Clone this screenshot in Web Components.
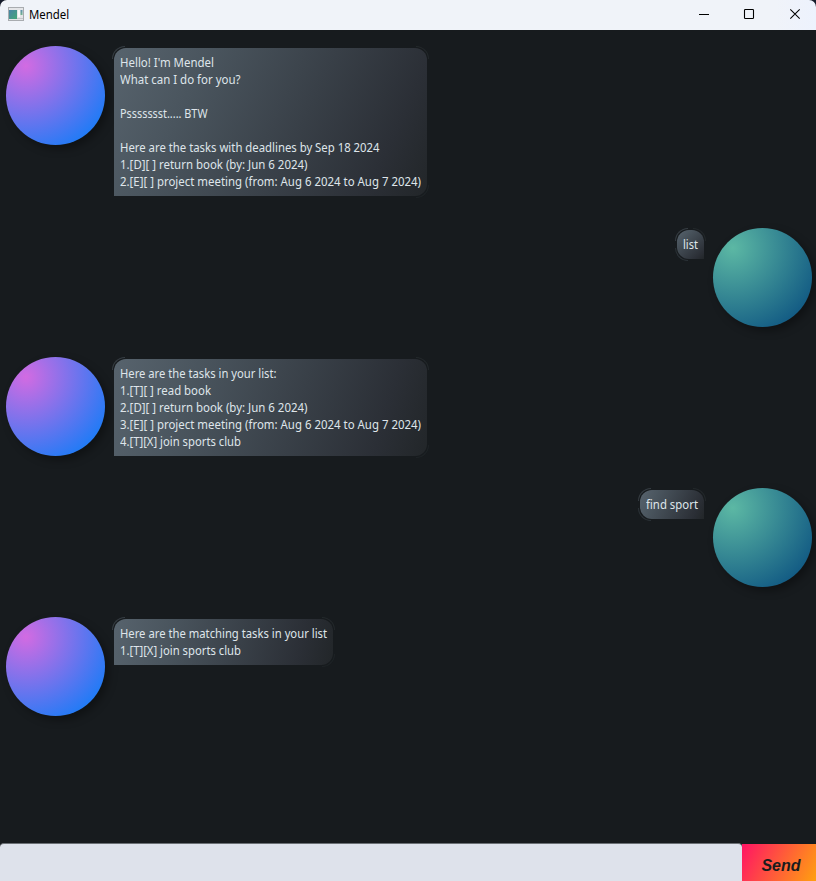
<!DOCTYPE html>
<html lang="en">
<head>
<meta charset="utf-8">
<title>Mendel</title>
<style>
body { margin: 0; background: #171b1e; overflow: hidden; }
</style>
</head>
<body>
<mendel-window>
  <title-bar slot="title">Mendel</title-bar>
  <chat-row style="--h:182px">
    <text-line w="94">Hello! I'm Mendel</text-line>
    <text-line w="120.5">What can I do for you?</text-line>
    <text-line></text-line>
    <text-line w="87.5">Pssssssst..... BTW</text-line>
    <text-line></text-line>
    <text-line w="259.5">Here are the tasks with deadlines by Sep 18 2024</text-line>
    <text-line w="187.5">1.[D][ ] return book (by: Jun 6 2024)</text-line>
    <text-line w="301">2.[E][ ] project meeting (from: Aug 6 2024 to Aug 7 2024)</text-line>
  </chat-row>
  <chat-row user style="--h:129px"><text-line w="15">list</text-line></chat-row>
  <chat-row style="--h:131px">
    <text-line w="156.5">Here are the tasks in your list:</text-line>
    <text-line w="91">1.[T][ ] read book</text-line>
    <text-line w="187.5">2.[D][ ] return book (by: Jun 6 2024)</text-line>
    <text-line w="301">3.[E][ ] project meeting (from: Aug 6 2024 to Aug 7 2024)</text-line>
    <text-line w="121">4.[T][X] join sports club</text-line>
  </chat-row>
  <chat-row user style="--h:129px"><text-line w="52">find sport</text-line></chat-row>
  <chat-row style="--h:131px">
    <text-line w="207">Here are the matching tasks in your list</text-line>
    <text-line w="121">1.[T][X] join sports club</text-line>
  </chat-row>
  <input-bar slot="footer">Send</input-bar>
</mendel-window>
<script>
const define = (name, html, ready) => customElements.define(name, class extends HTMLElement {
  constructor() {
    super();
    this.attachShadow({ mode: 'open' }).innerHTML = html;
  }
  connectedCallback() { if (ready) ready(this); }
});

define('mendel-window', `
<style>
:host { display: flex; flex-direction: column; width: 816px; height: 881px; background: #171b1e; overflow: hidden; }
main { flex: 1; min-height: 0; padding-top: 16px; box-sizing: border-box; overflow: hidden; }
</style>
<slot name="title"></slot><main><slot></slot></main><slot name="footer"></slot>`);

define('title-bar', `
<style>
:host { display: flex; height: 30px; align-items: center; background: linear-gradient(90deg, #f0f3f9 0 95%, #edf2fd);
  border-radius: 7px 7px 0 0; box-shadow: 0 -8px 0 #151b2b; color: #000; font: 12px/16px "Noto Sans", "Open Sans", sans-serif; flex: none; }
.app { margin: 0 5px 2px 8px; }
span { flex: 1; transform: scaleX(.95); transform-origin: 0 0; }
.win { flex: none; }
</style>
<svg class="app" width="16" height="14" viewBox="0 0 16 14">
<defs><linearGradient id="g" x2="1" y2="1"><stop stop-color="#4a83a8"/><stop offset="1" stop-color="#43a777"/></linearGradient>
<linearGradient id="k" x2="0" y2="1"><stop stop-color="#5d8fae"/><stop offset="1" stop-color="#72b58e"/></linearGradient></defs>
<rect x=".5" y=".5" width="15" height="13" fill="#e4e5e8" stroke="#a9acb0"/>
<rect x="1" y="3" width="8" height="9" fill="url(#g)"/>
<rect x="10" y="3" width="2" height="7" fill="#fafafa"/><rect x="12.5" y="3" width="2" height="5" fill="url(#k)"/>
<rect x="9" y="11" width="6" height="1" fill="#c4c6ca"/></svg>
<span><slot></slot></span>
<svg class="win" width="120" height="30" viewBox="0 0 120 30" fill="none" stroke="#000">
<path d="M3 14.5h10"/><rect x="48.5" y="9.5" width="9" height="9" rx=".8" stroke-width="1.1"/><path d="M94.3 9.3l9.4 9.4M103.7 9.3l-9.4 9.4" stroke-width="1.05"/></svg>`);

define('round-avatar', `
<style>
:host { display: block; width: 99px; height: 99px; border-radius: 50%; flex: none;
  background: radial-gradient(circle at 20% 20%, #d26be2 0, #207bf6 82%);
  box-shadow: 4px 4px 8px rgba(0,0,0,.35); }
:host([user]) { background: radial-gradient(circle at 20% 20%, #5cb8a4 0, #115983 84%); }
</style>`);

define('chat-bubble', `
<style>
:host { display: block; position: relative; margin-top: 2px; padding: 6px; box-sizing: border-box;
  border-radius: 12px 12px 12px 0; color: #dfe5ea;
  background: linear-gradient(var(--angle, 115deg), #57636d 0, #4a555e 25%, #2b2f36 84%, #222629 100%); }
:host([user]) { border-radius: 12px 12px 0 12px; }
i { position: absolute; width: 13px; height: 13px; box-sizing: border-box; border: 0 solid #363d43; }
.tl { left: -2px; top: -2px; border-width: 1px 0 0 1px; border-top-left-radius: 13px; }
.tr { right: -2px; top: -2px; border-width: 1px 1px 0 0; border-top-right-radius: 13px; border-color: #23282b; }
.br { right: -2px; bottom: -2px; border-width: 0 1px 1px 0; border-bottom-right-radius: 13px; border-color: #1e2326; }
.bl { left: -2px; bottom: -2px; border-width: 0 0 1px 1px; border-bottom-left-radius: 13px; display: none; border-color: #2b3237; }
:host([user]) .br { display: none; }
:host([user]) .bl { display: block; }
</style>
<i class="tl"></i><i class="tr"></i><i class="br"></i><i class="bl"></i><slot></slot>`);

// One line of a message, condensed to the width given in "w".
define('text-line', `<style>
:host { display: block; height: 17px; font: 12px/17px "Noto Sans", "Open Sans", sans-serif; }
span { display: inline-block; white-space: pre; vertical-align: top; transform-origin: 0 0; }
</style><span><slot></slot></span>`, el => {
  const w = parseFloat(el.getAttribute('w'));
  if (!w) return;
  el.style.width = w + 'px';
  const span = el.shadowRoot.querySelector('span');
  const natural = span.getBoundingClientRect().width;
  span.style.transform = `scaleX(${w / natural})`;
});

// The bubble's gradient runs along its own diagonal.
define('chat-row', `
<style>
:host { display: flex; height: var(--h); align-items: flex-start; gap: 9px; padding: 0 4px 0 6px; }
:host([user]) { flex-direction: row-reverse; }
</style>
<round-avatar></round-avatar><chat-bubble><slot></slot></chat-bubble>`, el => {
  const bubble = el.shadowRoot.querySelector('chat-bubble');
  if (el.hasAttribute('user'))
    for (const part of [bubble, el.shadowRoot.querySelector('round-avatar')]) part.setAttribute('user', '');
  const { width, height } = bubble.getBoundingClientRect();
  bubble.style.setProperty('--angle', 90 + Math.atan2(height, width) * 180 / Math.PI + 'deg');
});

define('input-bar', `
<style>
:host { display: flex; flex: none; height: 38px; }
.field { flex: 1; background: #dee2eb; border-top: 1px solid #6b7075; border-radius: 4px 4px 0 0; box-sizing: border-box; }
button { width: 74px; margin: 1px 0 0; padding: 7px 0 0 4px; border: 0; background: linear-gradient(116.6deg, #ff1464, #ffa010);
  color: #1a1c1e; font: italic bold 16px/18px "Liberation Sans", Arial, sans-serif; text-align: center; }
</style>
<div class="field"></div><button><slot></slot></button>`);
</script>
</body>
</html>
